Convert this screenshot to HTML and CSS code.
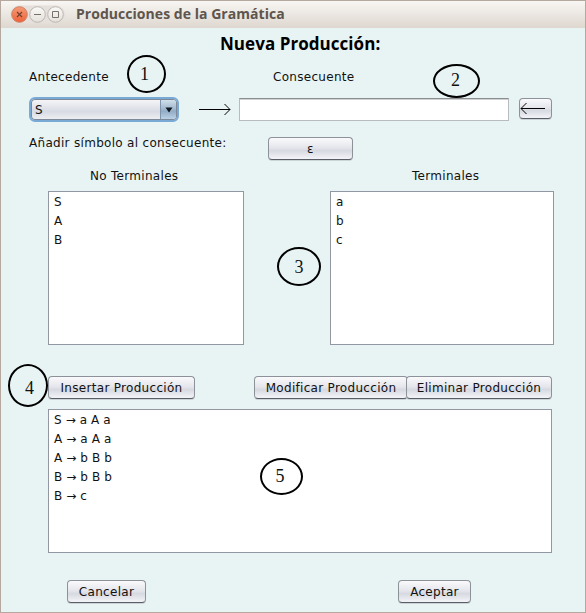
FILE: index.html
```html
<!DOCTYPE html>
<html lang="es">
<head>
<meta charset="utf-8">
<title>Producciones de la Gramática</title>
<link rel="stylesheet" href="styles.css">
</head>
<body>
<main class="window">
  <header class="titlebar">
    <svg class="controls" width="66" height="22" viewBox="0 0 66 22">
      <defs>
        <linearGradient id="orange" x2="0" y2="1"><stop stop-color="#f69a78"/><stop offset="1" stop-color="#ed6238"/></linearGradient>
        <linearGradient id="pale" x2="0" y2="1"><stop stop-color="#fbfaf8"/><stop offset="1" stop-color="#e4dfd9"/></linearGradient>
      </defs>
      <rect x="1" y="1.500" width="55" height="18" rx="9" fill="#e5e0db"/>
      <circle cx="10.500" cy="10.500" r="7.800" fill="url(#orange)" stroke="#ce8064"/>
      <circle cx="28.500" cy="10.500" r="7.800" fill="url(#pale)" stroke="#bcb6b0"/>
      <circle cx="46.500" cy="10.500" r="7.800" fill="url(#pale)" stroke="#bcb6b0"/>
      <path d="M8 8l5 5M13 8l-5 5" stroke="#74412f" stroke-width="1.200"/>
      <path d="M25 10.500h7M43.500 7.500h6v6h-6z" fill="none" stroke="#77716b"/>
    </svg>
    <span class="window-title">Producciones de la Gramática</span>
  </header>

  <h1>Nueva Producción:</h1>

  <div class="row field-labels">
    <span class="antecedent">Antecedente</span>
    <span>Consecuente</span>
  </div>

  <div class="row fields">
    <div class="combo"><span class="combo-value">S</span><span class="combo-arrow"><svg width="8" height="6" viewBox="0 0 8 6"><path d="M.5.500h7L4 5.500z" fill="#101820"/></svg></span></div>
    <svg class="arrow" width="34" height="13" viewBox="0 0 34 13"><path d="M0 6.500h31M25.500 1l5.500 5.500-5.500 5.500" fill="none" stroke="#000"/></svg>
    <div class="text-field"></div>
    <div class="button back"><svg width="26" height="13" viewBox="0 0 26 13"><path d="M1 6.500h24M6.500 1L1 6.500l5.500 5.500" fill="none" stroke="#000"/></svg></div>
  </div>

  <div class="row symbols">
    <span class="symbol-label">Añadir símbolo al consecuente:</span>
    <div class="button epsilon">ε</div>
  </div>

  <div class="row list-labels">
    <span class="nonterminals">No Terminales</span>
    <span>Terminales</span>
  </div>

  <div class="row lists">
    <ul class="list left"><li>S</li><li>A</li><li>B</li></ul>
    <ul class="list right"><li>a</li><li>b</li><li>c</li></ul>
  </div>

  <div class="row actions">
    <div class="button insert">Insertar Producción</div>
    <div class="button modify">Modificar Producción</div>
    <div class="button delete">Eliminar Producción</div>
  </div>

  <ul class="list productions">
    <li>S → a A a</li><li>A → a A a</li><li>A → b B b</li><li>B → b B b</li><li>B → c</li>
  </ul>

  <div class="row footer">
    <div class="button cancel">Cancelar</div>
    <div class="button accept">Aceptar</div>
  </div>

  <span class="marker m1">1</span>
  <span class="marker m2">2</span>
  <span class="marker m3">3</span>
  <span class="marker m4">4</span>
  <span class="marker m5">5</span>
</main>
</body>
</html>
```
FILE: styles.css
```css
* { box-sizing: border-box; }
body {
  margin: 0;
  background: #e8f4f4;
  font: 12px/16px "DejaVu Sans", sans-serif;
  letter-spacing: .3px;
  color: #111;
}
.window {
  position: relative;
  width: 586px;
  height: 613px;
  border: 1px solid #b5a99f;
  overflow: hidden;
  white-space: nowrap;
}
.titlebar {
  display: flex;
  align-items: center;
  height: 27px;
  padding-left: 8px;
  background: linear-gradient(#f8f6f3, #ded7cf);
}
.controls { display: block; flex: none; }
.window-title {
  margin: -2px 0 0 1px;
  font: bold 14px/20px "Open Sans", sans-serif;
  letter-spacing: .04px;
  color: #5d554e;
}
h1 {
  height: 36px;
  margin: 0;
  padding: 5px 0 0 219px;
  font: bold 17px/22px "Open Sans", sans-serif;
  letter-spacing: .05px;
  color: #000;
}
.row { display: flex; align-items: flex-start; }
.field-labels { height: 32px; padding: 5px 0 0 28px; }
.antecedent { width: 244px; }
.fields { height: 35px; padding-left: 28px; }
.combo {
  display: flex;
  width: 150px;
  height: 25px;
  margin-top: 1px;
  border: 2px solid #79aad6;
  border-radius: 6px;
  background: linear-gradient(#f7f7f9, #d8dbe3 60%, #f0f1f5);
  box-shadow: inset 0 0 0 1px #7d8998;
}
.combo-value { flex: 1; padding: 3px 0 0 4px; }
.combo-arrow {
  display: flex;
  align-items: center;
  justify-content: center;
  width: 16px;
  margin: 1px;
  border-left: 1px solid #7e95ad;
  border-radius: 0 3px 3px 0;
  background: linear-gradient(#d1dfeb, #93adc6 60%, #bbd2e6);
}
.arrow { margin: 7px 0 0 20px; }
.text-field {
  width: 270px;
  height: 23px;
  margin: 2px 0 0 6px;
  border: 1px solid #b8bcbf;
  border-top-color: #8b8d90;
  background: #fff;
  box-shadow: inset 0 1px #d0d1d3;
}
.button {
  display: flex;
  align-items: center;
  justify-content: center;
  height: 23px;
  border: 1px solid #8c919a;
  border-bottom-color: #5a5d65;
  border-radius: 4px;
  background: linear-gradient(#fafafc, #e4e5eb 48%, #d7d9e1 60%, #f3f4f8);
  box-shadow: 0 1px #cbd4d6;
}
.back { width: 33px; height: 21px; margin: 2px 0 0 10px; justify-content: flex-start; }
.symbols { height: 36px; padding-left: 28px; }
.symbol-label { width: 239px; padding-top: 4px; }
.epsilon { width: 85px; margin-top: 6px; }
.list-labels { height: 24px; padding: 1px 0 0 89px; }
.nonterminals { width: 322px; }
.list {
  margin: 0;
  padding: 1px 5px;
  list-style: none;
  border: 1px solid #9297a1;
  background: #fff;
}
.list li { height: 19px; line-height: 19px; letter-spacing: .1px; }
.lists { height: 185px; padding-left: 47px; gap: 86px; }
.left { width: 196px; height: 154px; }
.right { width: 224px; height: 154px; }
.actions { height: 33px; padding-left: 47px; }
.insert { width: 147px; }
.modify { width: 154px; margin-left: 59px; }
.delete { width: 146px; margin-left: -2px; }
.productions { width: 504px; height: 144px; margin-left: 47px; }
.footer { padding: 27px 0 0 66px; }
.cancel { width: 79px; }
.accept { width: 73px; margin-left: 252px; }
.marker {
  position: absolute;
  display: flex;
  align-items: center;
  justify-content: center;
  border: 2px solid #000;
  border-radius: 50%;
  font: 18px/20px "Liberation Serif", serif;
  letter-spacing: 0;
}
.m1 { left: 126px; top: 54px; width: 39px; height: 38px; padding-right: 4px; }
.m2 { left: 432px; top: 63px; width: 47px; height: 34px; padding: 0 2px 2px 0; }
.m3 { left: 276px; top: 246px; width: 44px; height: 39px; }
.m4 { left: 7px; top: 363px; width: 40px; height: 43px; padding: 4px 0 0 3px; }
.m5 { left: 259px; top: 457px; width: 43px; height: 37px; padding: 0 3px 2px 0; }
```
